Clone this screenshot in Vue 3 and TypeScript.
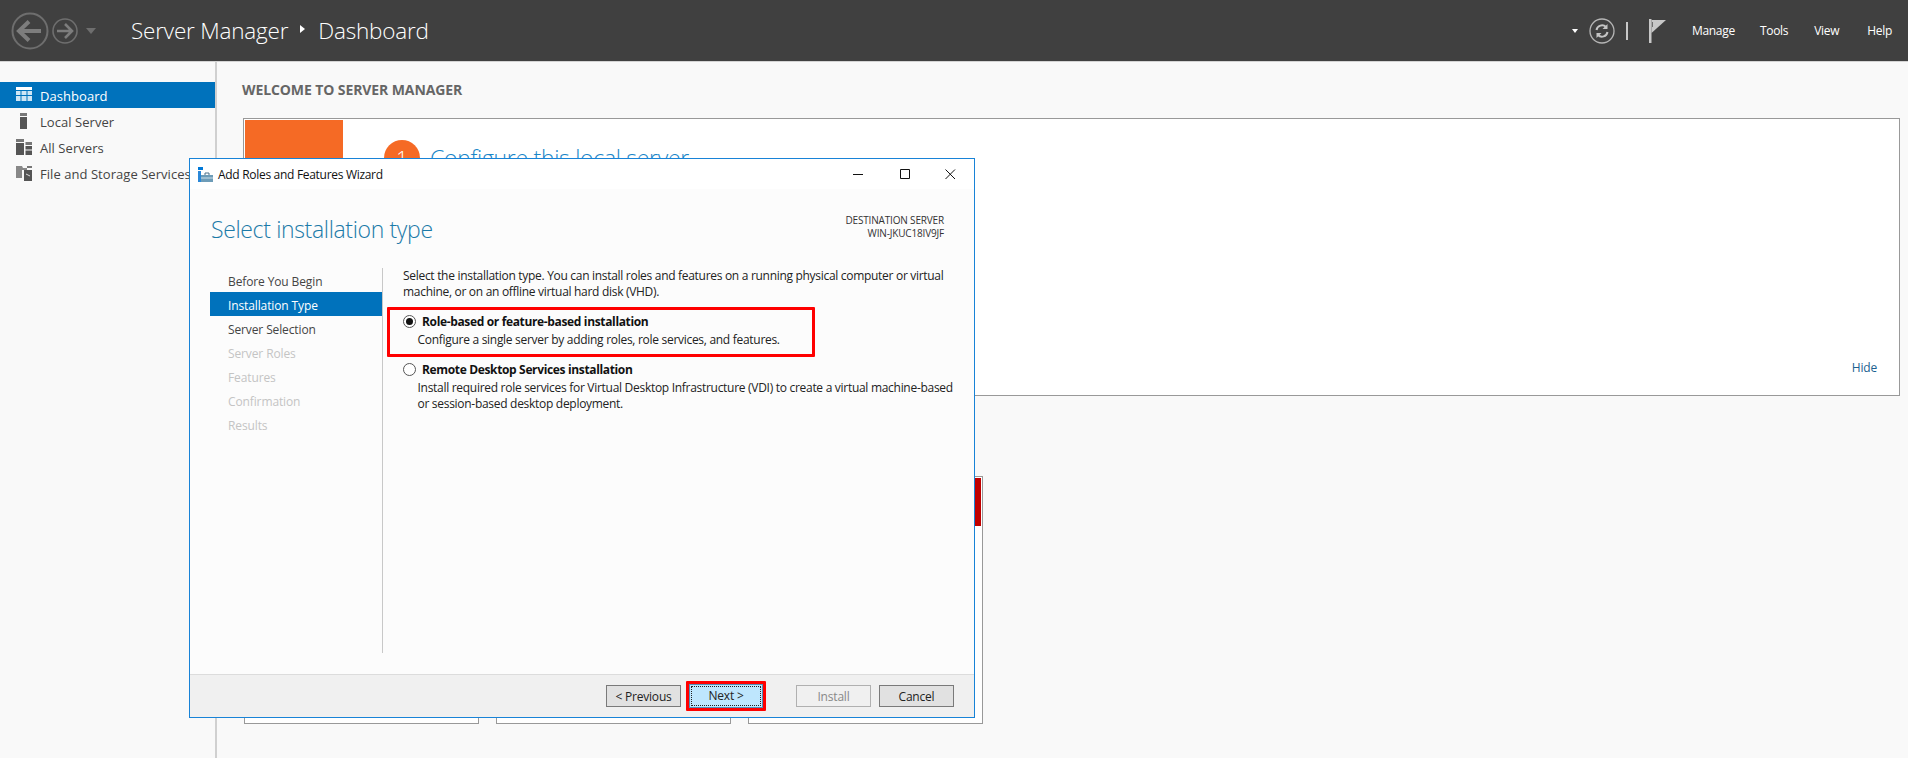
<script setup lang="ts">
const navItems = [
  { label: 'Dashboard', icon: 'dash', active: true },
  { label: 'Local Server', icon: 'local', active: false },
  { label: 'All Servers', icon: 'all', active: false },
  { label: 'File and Storage Services', icon: 'file', active: false },
]
const steps = [
  { label: 'Before You Begin', state: 'on' },
  { label: 'Installation Type', state: 'active' },
  { label: 'Server Selection', state: 'on' },
  { label: 'Server Roles', state: 'off' },
  { label: 'Features', state: 'off' },
  { label: 'Confirmation', state: 'off' },
  { label: 'Results', state: 'off' },
]
const menus = ['Manage', 'Tools', 'View', 'Help']
</script>

<template>
  <div class="page">
    <header class="top">
      <div class="history">
        <svg class="back" width="38" height="38" viewBox="0 0 38 38">
          <circle cx="19" cy="19" r="17.5" fill="none" stroke="#6e6e6e" stroke-width="2" />
          <path d="M8 19H30M18 9.500L8 19L18 28.500" fill="none" stroke="#7d7d7d" stroke-width="4" />
        </svg>
        <svg class="fwd" width="26" height="26" viewBox="0 0 26 26">
          <circle cx="13" cy="13" r="12" fill="none" stroke="#6e6e6e" stroke-width="1.6" />
          <path d="M5 13H20M13 6L20 13L13 20" fill="none" stroke="#7d7d7d" stroke-width="2.6" />
        </svg>
        <span class="hist-drop"></span>
      </div>
      <div class="crumbs">
        <span>Server Manager</span>
        <span class="crumb-sep"></span>
        <span>Dashboard</span>
      </div>
      <div class="top-right">
        <span class="drop"></span>
        <svg class="refresh" width="26" height="26" viewBox="0 0 26 26">
          <circle cx="13" cy="13" r="12" fill="none" stroke="#b5b5b5" stroke-width="1.3" />
          <path d="M7.500 12A5.600 5.600 0 0 1 17 9M18.500 14A5.600 5.600 0 0 1 9 17" fill="none" stroke="#c4c4c4" stroke-width="2" />
          <path d="M18.500 6V11H13.500ZM7.500 20V15H12.500Z" fill="#c4c4c4" />
        </svg>
        <span class="bar"></span>
        <svg class="flag" width="18" height="24" viewBox="0 0 18 24">
          <path d="M0 0H2.500V24H0Z" fill="#c8c8c8" />
          <path d="M2.500 1H17L2.500 14Z" fill="#c8c8c8" />
          <path d="M3.500 3V8" stroke="#707070" stroke-width="1" />
        </svg>
        <nav class="menus">
          <span v-for="m in menus" :key="m" class="menu">{{ m }}</span>
        </nav>
      </div>
    </header>

    <div class="body">
      <aside class="side">
        <div v-for="item in navItems" :key="item.label" class="side-row" :class="{ active: item.active }">
          <svg class="side-icon" width="16" height="16" viewBox="0 0 16 16">
            <template v-if="item.icon === 'dash'">
              <path d="M0 0H16V3H0Z" fill="#fff" />
              <path d="M0 4H4.500V8H0ZM5.500 4H10.500V8H5.500ZM11.500 4H16V8H11.500ZM0 9H4.500V14H0ZM5.500 9H10.500V14H5.500ZM11.500 9H16V14H11.500Z" fill="#cfe6f5" />
            </template>
            <template v-else-if="item.icon === 'local'">
              <path d="M4 0H11V3H4Z" fill="#777" />
              <path d="M4 4H11V16H4Z" fill="#555" />
            </template>
            <template v-else-if="item.icon === 'all'">
              <path d="M0 0H8V3H0ZM9.500 3H16V6H9.500Z" fill="#777" />
              <path d="M0 4H8V16H0ZM9.500 7H16V10.500H9.500ZM9.500 11.500H16V16H9.500Z" fill="#555" />
            </template>
            <template v-else>
              <path d="M0 1H6L7 3H11V5H6V13H0Z" fill="#888" />
              <path d="M11 1H16V3H11Z" fill="#777" />
              <path d="M8 5H16V16H8Z" fill="#555" />
              <path d="M10 9L14 11" stroke="#ddd" stroke-width="1" />
            </template>
          </svg>
          <span class="side-label">{{ item.label }}</span>
        </div>
      </aside>

      <main class="main">
        <h2 class="welcome">WELCOME TO SERVER MANAGER</h2>
        <section class="intro">
          <div class="orange"></div>
          <div class="intro-head">
            <span class="num">1</span>
            <span class="configure">Configure this local server</span>
          </div>
          <span class="hide">Hide</span>
        </section>
        <div class="cards">
          <div class="card"></div>
          <div class="card"></div>
          <div class="card"><div class="card-red"></div></div>
        </div>
      </main>
    </div>

    <div class="wizard">
      <div class="win-title">
        <svg class="win-icon" width="15" height="15" viewBox="0 0 15 15">
          <path d="M0 0H5V3H0Z" fill="#0078d7" />
          <path d="M0 4H3V15H0Z" fill="#2b88d8" />
          <path d="M3 8H15V15H3Z" fill="#6d9cb8" />
          <path d="M7 8V6H11V8" fill="none" stroke="#4a6f88" stroke-width="1" />
          <path d="M3 11H15" stroke="#cfe0ea" stroke-width="1" />
        </svg>
        <span class="win-name">Add Roles and Features Wizard</span>
        <div class="win-ctrl">
          <svg width="11" height="11" viewBox="0 0 11 11"><path d="M0 5.500H10" stroke="#111" stroke-width="1" /></svg>
          <svg width="11" height="11" viewBox="0 0 11 11"><path d="M.5.500H9.500V9.500H.5Z" fill="none" stroke="#111" stroke-width="1" /></svg>
          <svg width="11" height="11" viewBox="0 0 11 11"><path d="M.5.500L10 10M10 .5L.5 10" fill="none" stroke="#111" stroke-width="1" /></svg>
        </div>
      </div>
      <div class="win-body">
        <div class="win-head">
          <h1 class="page-title">Select installation type</h1>
          <div class="dest">
            <div>DESTINATION SERVER</div>
            <div>WIN-JKUC18IV9JF</div>
          </div>
        </div>
        <div class="win-main">
          <ul class="steps">
            <li v-for="s in steps" :key="s.label" class="step" :class="s.state">{{ s.label }}</li>
          </ul>
          <div class="pane">
            <p class="lead">Select the installation type. You can install roles and features on a running physical computer or virtual machine, or on an offline virtual hard disk (VHD).</p>
            <div class="option first">
              <div class="opt-title"><span class="radio checked"></span><b>Role-based or feature-based installation</b></div>
              <p class="opt-desc">Configure a single server by adding roles, role services, and features.</p>
            </div>
            <div class="option second">
              <div class="opt-title"><span class="radio"></span><b>Remote Desktop Services installation</b></div>
              <p class="opt-desc">Install required role services for Virtual Desktop Infrastructure (VDI) to create a virtual machine-based or session-based desktop deployment.</p>
            </div>
          </div>
        </div>
      </div>
      <div class="win-foot">
        <button class="btn">&lt; Previous</button>
        <span class="next-wrap"><button class="btn next"><span>Next &gt;</span></button></span>
        <button class="btn disabled">Install</button>
        <button class="btn">Cancel</button>
      </div>
    </div>
  </div>
</template>

<style>
html, body { margin: 0; background: #f9f9f9; }
</style>

<style scoped>
.page {
  position: relative;
  width: 1908px;
  height: 758px;
  overflow: hidden;
  background: #f9f9f9;
  font-family: "Open Sans", "Noto Sans", sans-serif;
  color: #3c3c3c;
}
.top {
  height: 62px;
  box-sizing: border-box;
  background: #404040;
  border-bottom: 1px solid #d4d4d4;
  display: flex;
  align-items: center;
  color: #fff;
}
.history {
  width: 131px;
  flex: none;
  display: flex;
  align-items: center;
  padding-left: 11px;
  box-sizing: border-box;
}
.fwd { margin-left: 3px; }
.hist-drop {
  margin-left: 8px;
  width: 0;
  height: 0;
  border-left: 5px solid transparent;
  border-right: 5px solid transparent;
  border-top: 6px solid #6e6e6e;
}
.crumbs {
  display: flex;
  align-items: center;
  font-size: 22.5px;
  font-weight: 300;
  color: #fff;
  letter-spacing: -0.2px;
}
.crumb-sep {
  width: 0;
  height: 0;
  margin: 0 13px 0 12px;
  border-top: 4px solid transparent;
  border-bottom: 4px solid transparent;
  border-left: 5px solid #fff;
  position: relative;
  top: -2px;
}
.top-right {
  margin-left: auto;
  display: flex;
  align-items: center;
  padding-right: 16px;
}
.drop {
  width: 0;
  height: 0;
  border-left: 3.5px solid transparent;
  border-right: 3.5px solid transparent;
  border-top: 4px solid #fff;
  margin-right: 11px;
}
.bar {
  width: 2px;
  height: 18px;
  background: #c8c8c8;
  margin-left: 11px;
  margin-right: 21px;
}
.flag { margin-right: 25px; }
.menus { display: flex; gap: 26px; }
.menu { font-size: 12px; color: #fff; letter-spacing: -0.3px; }
.menu:nth-child(1) { margin-right: -1px; }
.menu:nth-child(3) { margin-right: 2px; }

.body { display: flex; height: 696px; }
.side {
  width: 217px;
  flex: none;
  box-sizing: border-box;
  border-right: 2px solid #d0d0d0;
  padding-top: 20px;
  background: #f9f9f9;
}
.side-row {
  height: 26px;
  display: flex;
  align-items: center;
  font-size: 13px;
  color: #444;
  padding-left: 16px;
  white-space: nowrap;
  letter-spacing: 0.05px;
}
.side-label { padding-top: 2px; }
.side-row.active { background: #0072bc; color: #fff; }
.side-icon { margin-right: 8px; flex: none; }

.main { flex: 1; padding: 0 8px 0 26px; min-width: 0; }
.welcome {
  margin: 19px 0 0 -1px;
  height: 18px;
  line-height: 18px;
  font-size: 14px;
  font-weight: 700;
  color: #666;
  letter-spacing: -0.1px;
}
.intro {
  position: relative;
  box-sizing: border-box;
  margin-top: 19px;
  height: 278px;
  border: 1px solid #999;
  background: #fff;
  padding: 1px;
  display: flex;
}
.orange { width: 98px; background: #f56a25; flex: none; height: 100%; }
.intro-head { display: flex; align-items: flex-start; margin: 20px 0 0 41px; gap: 10px; }
.num {
  width: 36px;
  height: 36px;
  border-radius: 50%;
  background: #f56a25;
  color: #fff;
  font-size: 20px;
  font-weight: 300;
  display: flex;
  align-items: center;
  justify-content: center;
}
.configure {
  font-size: 23px;
  font-weight: 300;
  color: #1a86c8;
  line-height: 36px;
  letter-spacing: -0.3px;
}
.hide {
  position: absolute;
  right: 22px;
  bottom: 19px;
  font-size: 12px;
  color: #1c5f90;
  letter-spacing: -0.2px;
}
.cards { display: flex; gap: 17px; margin: 80px 0 0 1px; }
.card {
  box-sizing: border-box;
  width: 235px;
  height: 248px;
  border: 1px solid #999;
  background: #fff;
  padding: 1px;
}
.card-red { height: 48px; background: #c00000; }

.wizard {
  position: absolute;
  left: 189px;
  top: 158px;
  width: 786px;
  height: 560px;
  box-sizing: border-box;
  border: 1px solid #1883d7;
  background: #fcfcfc;
  display: flex;
  flex-direction: column;
  color: #222;
}
.win-title {
  height: 30px;
  flex: none;
  background: #fff;
  display: flex;
  align-items: center;
  padding-left: 8px;
}
.win-icon { flex: none; margin-right: 5px; }
.win-name { font-size: 12px; color: #111; letter-spacing: -0.3px; }
.win-ctrl {
  margin-left: auto;
  display: flex;
  gap: 35px;
  padding-right: 18px;
  align-items: center;
}
.win-ctrl svg { display: block; }
.win-ctrl svg:nth-child(2) { margin-left: 1px; margin-right: -1px; }
.win-body { flex: 1; display: flex; flex-direction: column; min-height: 0; }
.win-head {
  display: flex;
  justify-content: space-between;
  height: 79px;
  flex: none;
  padding: 0 30px 0 21px;
}
.page-title {
  margin: 24px 0 0;
  font-size: 23px;
  line-height: 32px;
  font-weight: 300;
  color: #1b7aa8;
  letter-spacing: -0.35px;
}
.dest {
  margin-top: 25px;
  text-align: right;
  font-size: 10px;
  line-height: 13px;
  color: #333;
  letter-spacing: -0.17px;
}
.win-main { flex: none; height: 385px; display: flex; }
.steps {
  list-style: none;
  margin: 0;
  padding: 0 0 0 20px;
  width: 172px;
  box-sizing: content-box;
  flex: none;
}
.step {
  box-sizing: border-box;
  height: 24px;
  padding-top: 2px;
  line-height: 24px;
  padding-left: 18px;
  font-size: 12px;
  white-space: nowrap;
  color: #444;
  letter-spacing: -0.12px;
}
.step.active { background: #0072bc; color: #fff; }
.step.off { color: #c4c4c4; }
.pane {
  flex: 1;
  border-left: 1px solid #c8c8c8;
  padding: 0 15px 0 20px;
  min-width: 0;
}
.lead {
  margin: 0;
  font-size: 12px;
  line-height: 16px;
  color: #222;
  letter-spacing: -0.3px;
}
.option { font-size: 12px; }
.option.first {
  box-sizing: border-box;
  width: 428px;
  height: 50px;
  margin: 7px 0 0 -16px;
  padding-left: 13px;
  border: 3px solid #f00;
  border-radius: 1px;
}
.option.second { margin-top: 1px; }
.opt-title { display: flex; align-items: center; height: 22px; }
.opt-title b { font-weight: 700; color: #111; letter-spacing: -0.35px; }
.radio {
  position: relative;
  width: 11px;
  height: 11px;
  border: 1px solid #555;
  border-radius: 50%;
  margin-right: 6px;
  flex: none;
  background: #fff;
}
.radio.checked::after {
  content: "";
  position: absolute;
  inset: 2px;
  border-radius: 50%;
  background: #111;
}
.opt-desc {
  margin: 0 0 0 14.5px;
  font-size: 12px;
  line-height: 16px;
  color: #222;
  letter-spacing: -0.29px;
}
.win-foot {
  height: 43px;
  flex: none;
  box-sizing: border-box;
  background: #f0f0f0;
  border-top: 1px solid #dcdcdc;
  display: flex;
  align-items: center;
  padding-left: 416px;
}
.btn {
  box-sizing: border-box;
  width: 75px;
  height: 22px;
  border: 1px solid #7a7a7a;
  background: #e1e1e1;
  font: 12px "Open Sans", "Noto Sans", sans-serif;
  color: #222;
  padding: 0;
  letter-spacing: -0.2px;
}
.next-wrap {
  box-sizing: border-box;
  width: 80px;
  height: 30px;
  border: 3px solid #f00;
  margin-left: 5px;
  margin-right: 30px;
  border-radius: 1px;
  display: flex;
  align-items: center;
  justify-content: center;
}
.btn.next {
  width: 74px;
  height: 24px;
  border: 1px solid #4f8fb8;
  background: #bee6fd;
  padding: 1px;
}
.btn.next span {
  display: block;
  height: 100%;
  box-sizing: border-box;
  border: 1px dotted #222;
  line-height: 18px;
}
.btn.disabled { background: #f0f0f0; border-color: #b0b0b0; color: #888; margin-right: 8px; }
</style>
